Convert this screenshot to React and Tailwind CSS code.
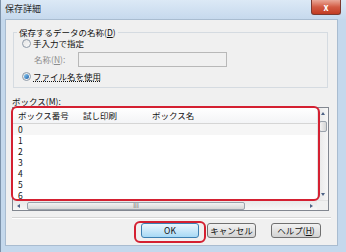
const font = { fontFamily: '"Noto Sans CJK JP", "Liberation Sans", sans-serif' };

const Radio = ({ checked }) => (
  <span className="flex h-[9px] w-[9px] items-center justify-center rounded-full border border-[#8e9aa8] bg-gradient-to-br from-[#e4e4e4] to-[#fafafa]">
    {checked && <span className="h-[5px] w-[5px] rounded-full bg-gradient-to-br from-[#8fd0f5] to-[#1c5fa8]" />}
  </span>
);

const rows = ['0', '1', '2', '3', '4', '5', '6'];

export default function App() {
  return (
    <div className="relative flex h-[252px] w-[346px] flex-col overflow-hidden border-l border-[#7d93ab] bg-[#c4d8ec] text-[8.5px] text-[#111]" style={font}>
      {/* title bar */}
      <div className="flex h-[19px] shrink-0 items-start justify-between bg-gradient-to-b from-[#dce9f6] to-[#c6d9ed]">
        <span className="pl-[4px] pt-[3px] text-[9px] leading-[12px] text-[#2a2a2a]">保存詳細</span>
        <div className="mr-[5px] flex h-[15px] w-[30px] items-center justify-center rounded-b-[3px] border border-t-0 border-[#7b3a30] bg-gradient-to-b from-[#e9a898] via-[#d25b43] to-[#c23b22] text-[9px] font-bold leading-none text-white">
          x
        </div>
      </div>

      {/* client area */}
      <div className="ml-[4px] mr-[8px] flex h-[227px] shrink-0 flex-col border border-[#a9bcd0] bg-[#f0f0f0]">
        <fieldset className="ml-[7px] mt-[6px] h-[62px] w-[315px] border border-[#d5dbe1]">
          <legend className="ml-[3px] px-[2px] leading-[12px]">保存するデータの名称(<span className="underline">D</span>)</legend>
          <div className="flex h-[11px] items-center gap-[2px] pl-[8px]">
            <Radio />
            <span className="leading-[11px]">手入力で指定</span>
          </div>
          <div className="mt-[2px] flex h-[16px] items-center pl-[20px]">
            <span className="w-[44px] leading-[11px] text-[#8d8d8d]">名称(<span className="underline">N</span>):</span>
            <div className="h-[15px] w-[149px] border border-[#b8b8b8] bg-[#f0f0f0]" />
          </div>
          <div className="mt-[3px] flex h-[12px] items-center gap-[2px] pl-[8px]">
            <Radio checked />
            <span className="leading-[11px] underline decoration-dotted">ファイル名を使用</span>
          </div>
        </fieldset>

        <div className="ml-[6px] mt-[7px] leading-[12px]">ボックス(<span className="underline">M</span>):</div>

        {/* listbox */}
        <div className="ml-[6px] flex h-[104px] w-[317px] flex-col border border-[#828790] bg-white">
          <div className="flex h-[92px]">
            <div className="flex w-[304px] flex-col overflow-hidden">
              <div className="flex h-[16px] shrink-0 items-center border-b border-[#d5d5d5] bg-gradient-to-b from-white to-[#f3f4f6]">
                <span className="w-[70px] pl-[5px]">ボックス番号</span>
                <span className="w-[69px]">試し印刷</span>
                <span>ボックス名</span>
              </div>
              {rows.map((r, i) => (
                <div key={r} className={`h-[11px] shrink-0 pl-[5px] leading-[11px] ${i === 0 ? 'bg-[#f6f6f6]' : ''}`}>
                  {r}
                </div>
              ))}
            </div>
            {/* vertical scrollbar */}
            <div className="flex w-[11px] flex-col border-l border-[#e3e3e3] bg-gradient-to-r from-[#e8e8e8] to-[#f7f7f7]">
              <div className="flex h-[11px] items-center justify-center">
                <span className="h-0 w-0 border-x-[2px] border-b-[3px] border-x-transparent border-b-[#4d6185]" />
              </div>
              <div className="mx-[1px] mt-[2px] h-[11px] rounded-[2px] border border-[#9aa2ac] bg-gradient-to-r from-[#f2f2f2] to-[#d6d6d6]" />
              <div className="flex-1" />
              <div className="flex h-[11px] items-center justify-center">
                <span className="h-0 w-0 border-x-[2px] border-t-[3px] border-x-transparent border-t-[#4d6185]" />
              </div>
            </div>
          </div>
          {/* horizontal scrollbar */}
          <div className="flex h-[10px] border-t border-[#e3e3e3]">
            <div className="flex w-[304px] items-center bg-gradient-to-b from-[#e8e8e8] to-[#f7f7f7]">
              <div className="flex h-full w-[11px] items-center justify-center">
                <span className="h-0 w-0 border-y-[2px] border-r-[3px] border-y-transparent border-r-[#4d6185]" />
              </div>
              <div className="ml-[3px] flex h-[8px] w-[218px] items-center justify-center rounded-[2px] border border-[#9aa2ac] bg-gradient-to-b from-[#f2f2f2] to-[#d6d6d6] text-[6px] leading-none text-[#6a6a6a]">
                III
              </div>
              <div className="flex-1" />
              <div className="flex h-full w-[11px] items-center justify-center">
                <span className="h-0 w-0 border-y-[2px] border-l-[3px] border-y-transparent border-l-[#4d6185]" />
              </div>
            </div>
            <div className="w-[11px] bg-[#f0f0f0]" />
          </div>
        </div>

        <div className="ml-[6px] mt-[6px] w-[319px] border-t border-b border-t-[#d5d5d5] border-b-white" />

        {/* buttons */}
        <div className="mt-[4px] flex items-center pl-[135px]">
          <button className="h-[15px] w-[58px] rounded-[3px] border border-[#3c7fb1] bg-gradient-to-b from-[#eaf6fd] to-[#a7d9f5] leading-none">OK</button>
          <button className="ml-[8px] h-[15px] w-[49px] rounded-[3px] border border-[#707070] bg-gradient-to-b from-[#f2f2f2] to-[#d4d4d4] leading-none">キャンセル</button>
          <button className="ml-[15px] h-[15px] w-[50px] rounded-[3px] border border-[#707070] bg-gradient-to-b from-[#f2f2f2] to-[#d4d4d4] leading-none">ヘルプ(<span className="underline">H</span>)</button>
        </div>
      </div>

      {/* red highlights */}
      <div className="pointer-events-none absolute left-[10px] top-[106px] h-[95px] w-[309px] rounded-[6px] border-2 border-[#d42031]" />
      <div className="pointer-events-none absolute left-[133px] top-[221px] h-[22px] w-[72px] rounded-[6px] border-2 border-[#d42031]" />
    </div>
  );
}
